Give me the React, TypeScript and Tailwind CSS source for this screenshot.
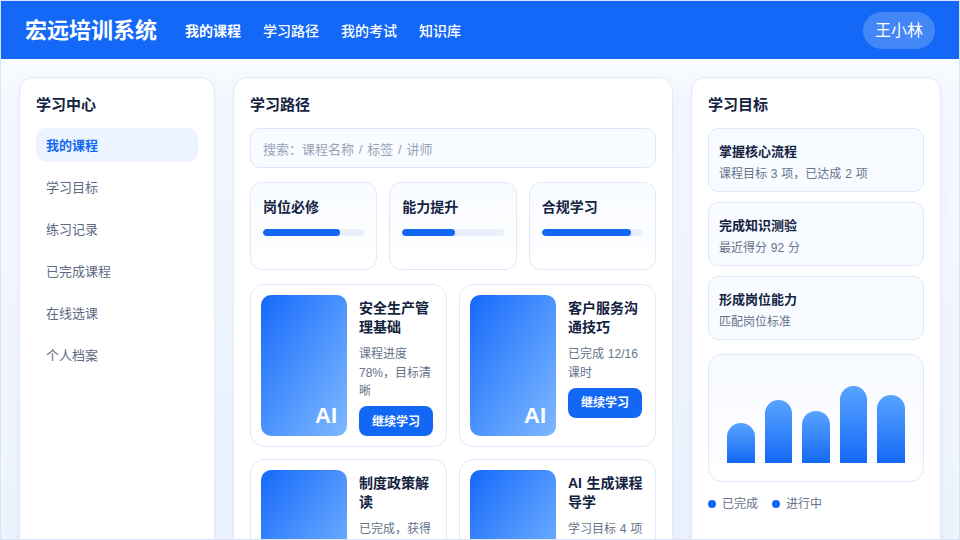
import * as React from "react";

const menu = ["我的课程", "学习目标", "练习记录", "已完成课程", "在线选课", "个人档案"];

const tracks = [
  { name: "岗位必修", pct: 76 },
  { name: "能力提升", pct: 52 },
  { name: "合规学习", pct: 88 },
];

const courses = [
  { title: "安全生产管理基础", desc: "课程进度 78%，目标清晰" },
  { title: "客户服务沟通技巧", desc: "已完成 12/16 课时" },
  { title: "制度政策解读", desc: "已完成，获得证书" },
  { title: "AI 生成课程导学", desc: "学习目标 4 项" },
];

const goals = [
  { title: "掌握核心流程", desc: "课程目标 3 项，已达成 2 项" },
  { title: "完成知识测验", desc: "最近得分 92 分" },
  { title: "形成岗位能力", desc: "匹配岗位标准" },
];

const bars = [40, 63, 52, 77, 68];

function CourseCard({ title, desc }: { title: string; desc: string }) {
  return (
    <div className="flex gap-3 rounded-[14px] border border-[#dfe9fb] bg-white p-2.5">
      <div className="relative w-[86px] shrink-0 self-stretch rounded-[10px] bg-gradient-to-br from-[#1268fb] to-[#7db8ff]">
        <span className="absolute bottom-1.5 right-[10px] text-[22px] leading-[28px] font-bold text-white">AI</span>
      </div>
      <div className="min-w-0 flex-1">
        <div className="mt-1 text-[14px] leading-[19px] font-bold text-[#14233f]">{title}</div>
        <div className="mt-2 text-[12px] leading-[18.6px] text-[#66738a]">{desc}</div>
        <button className="mt-[5.4px] h-[30px] w-[74px] rounded-lg bg-[#1268f5] pt-px text-[12px] font-bold text-white">继续学习</button>
      </div>
    </div>
  );
}

export default function App() {
  return (
    <div className="flex h-[540px] w-[960px] flex-col overflow-hidden border border-[#d8e4f8] bg-gradient-to-b from-[#f8fbff] to-[#eef4fd] font-['Liberation_Sans','Noto_Sans_CJK_SC',sans-serif] [word-spacing:0.5px]">
      <header className="flex h-[58px] shrink-0 items-center gap-7 bg-[#1368f7] px-6 text-white">
        <div className="pt-0.5 text-[22px] font-bold leading-none">宏远培训系统</div>
        <nav className="flex flex-1 items-center gap-[22px] pt-0.5 text-[14px]">
          <span className="font-bold">我的课程</span>
          <span className="font-medium">学习路径</span>
          <span className="font-medium">我的考试</span>
          <span className="font-medium">知识库</span>
        </nav>
        <div className="flex h-[37px] w-[72px] items-center justify-center rounded-full bg-white/20 pt-0.5 text-[16px]">王小林</div>
      </header>

      <main className="grid min-h-0 flex-1 grid-cols-[196px_440px_250px] items-start gap-[18px] overflow-hidden p-[18px]">
        <aside className="h-[600px] rounded-[14px] border border-[#dfe9fb] bg-white p-4 shadow-[0_6px_20px_rgba(20,80,180,0.05)]">
          <h2 className="mb-3 text-[15px] leading-[22px] font-bold text-[#14233f]">学习中心</h2>
          <ul className="flex flex-col gap-2">
            {menu.map((m, i) => (
              <li
                key={m}
                className={
                  i === 0
                    ? "flex h-[34px] items-center rounded-[10px] bg-[#edf4ff] px-2.5 pt-0.5 text-[13px] font-semibold text-[#1268f5]"
                    : "flex h-[34px] items-center rounded-[10px] px-2.5 pt-0.5 text-[13px] text-[#5c6a82]"
                }
              >
                {m}
              </li>
            ))}
          </ul>
        </aside>

        <section className="h-[600px] rounded-[14px] border border-[#dfe9fb] bg-white p-4 shadow-[0_6px_20px_rgba(20,80,180,0.05)]">
          <h2 className="mb-3 text-[15px] leading-[22px] font-bold text-[#14233f]">学习路径</h2>
          <div className="flex h-10 items-center rounded-[10px] border border-[#dbe7fb] bg-[#f8fbff] px-3 pt-1 text-[13px] text-[#98a3b5] [word-spacing:1.2px]">
            搜索：课程名称 / 标签 / 讲师
          </div>
          <div className="mt-3.5 grid grid-cols-3 gap-3">
            {tracks.map((t) => (
              <div key={t.name} className="h-[88px] rounded-xl border border-[#dfe9fb] bg-gradient-to-b from-[#f8fbff] to-white p-3">
                <div className="text-[14px] leading-[24px] font-bold text-[#14233f]">{t.name}</div>
                <div className="mt-[10px] h-[7px] overflow-hidden rounded-full bg-[#e9effb]">
                  <div className="h-full rounded-full bg-[#1268f5]" style={{ width: `${t.pct}%` }} />
                </div>
              </div>
            ))}
          </div>
          <div className="mt-3.5 grid grid-cols-2 gap-3">
            {courses.map((c) => (
              <CourseCard key={c.title} {...c} />
            ))}
          </div>
        </section>

        <aside className="h-[600px] rounded-[14px] border border-[#dfe9fb] bg-white p-4 shadow-[0_6px_20px_rgba(20,80,180,0.05)]">
          <h2 className="mb-3 text-[15px] leading-[22px] font-bold text-[#14233f]">学习目标</h2>
          <div className="flex flex-col gap-2.5">
            {goals.map((g) => (
              <div key={g.title} className="h-16 rounded-[10px] border border-[#dfe9fb] bg-[#f8fbff] px-2.5 pt-[13px]">
                <div className="text-[13px] leading-[19px] font-bold text-[#14233f]">{g.title}</div>
                <div className="mt-1 text-[12px] leading-[18px] text-[#66738a]">{g.desc}</div>
              </div>
            ))}
          </div>
          <div className="mt-3.5 grid h-32 grid-cols-5 items-end gap-2.5 rounded-[14px] border border-[#dfe9fb] bg-gradient-to-b from-[#f6f9ff] to-white p-[18px]">
            {bars.map((h, i) => (
              <div key={i} className="rounded-t-[14px] bg-gradient-to-b from-[#57a3ff] to-[#1268f5]" style={{ height: h }} />
            ))}
          </div>
          <div className="mt-3 flex items-center gap-3.5 pt-px text-[12px] leading-[18px] text-[#66738a]">
            <span className="flex items-center gap-1.5"><i className="h-2 w-2 rounded-full bg-[#1268f5]" />已完成</span>
            <span className="flex items-center gap-1.5"><i className="h-2 w-2 rounded-full bg-[#1268f5]" />进行中</span>
          </div>
        </aside>
      </main>
    </div>
  );
}
